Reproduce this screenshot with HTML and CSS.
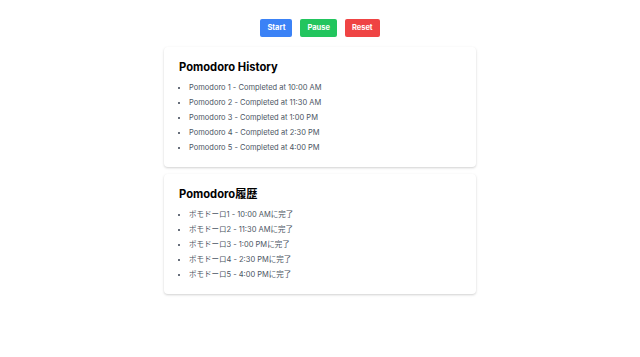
FILE: index.html
```html
<!DOCTYPE html>
<html lang="en">
<head>
<meta charset="utf-8">
<title>Pomodoro</title>
<link rel="stylesheet" href="styles.css">
</head>
<body>
<main class="page">
  <div class="controls">
    <button class="btn btn-start">Start</button>
    <button class="btn btn-pause">Pause</button>
    <button class="btn btn-reset">Reset</button>
  </div>
  <section class="card">
    <h2 class="card-title">Pomodoro History</h2>
    <ul class="history">
      <li>Pomodoro 1 - Completed at 10:00 AM</li>
      <li>Pomodoro 2 - Completed at 11:30 AM</li>
      <li>Pomodoro 3 - Completed at 1:00 PM</li>
      <li>Pomodoro 4 - Completed at 2:30 PM</li>
      <li>Pomodoro 5 - Completed at 4:00 PM</li>
    </ul>
  </section>
  <section class="card">
    <h2 class="card-title">Pomodoro履歴</h2>
    <ul class="history">
      <li>ポモドーロ1 - 10:00 AMに完了</li>
      <li>ポモドーロ2 - 11:30 AMに完了</li>
      <li>ポモドーロ3 - 1:00 PMに完了</li>
      <li>ポモドーロ4 - 2:30 PMに完了</li>
      <li>ポモドーロ5 - 4:00 PMに完了</li>
    </ul>
  </section>
</main>
</body>
</html>
```
FILE: styles.css
```css
html, body {
  margin: 0;
  padding: 0;
  background: #ffffff;
}
body {
  font-family: Inter, "Noto Sans CJK JP", sans-serif;
  color: #111827;
}
.page {
  width: 312px;
  margin: 0 auto;
  padding-top: 19px;
  display: flex;
  flex-direction: column;
}
.controls {
  display: flex;
  justify-content: center;
  gap: 8px;
  margin-bottom: 10px;
}
.btn {
  font-family: Inter, sans-serif;
  font-size: 7.5px;
  font-weight: 700;
  color: #ffffff;
  border: none;
  border-radius: 2px;
  height: 18px;
  padding: 0 7px;
  line-height: 18px;
}
.btn-start { background: #3b82f6; }
.btn-pause { background: #22c55e; }
.btn-reset { background: #ef4444; }
.card {
  background: #ffffff;
  border-radius: 4px;
  box-shadow: 0 1px 3px rgba(0,0,0,0.12), 0 1px 2px rgba(0,0,0,0.07);
  padding: 12px 15px 13px;
  margin-bottom: 7px;
}
.card-title {
  margin: 0 0 7px;
  height: 16px;
  font-size: 11.2px;
  line-height: 16px;
  font-weight: 700;
  color: #000000;
}
.history {
  margin: 0;
  padding-left: 10px;
  list-style: disc;
  font-size: 7.5px;
  line-height: 12px;
  color: #4b5563;
}
.history li {
  height: 12px;
}
.history li + li {
  margin-top: 3px;
}
.history li::marker {
  color: #374151;
}
```
